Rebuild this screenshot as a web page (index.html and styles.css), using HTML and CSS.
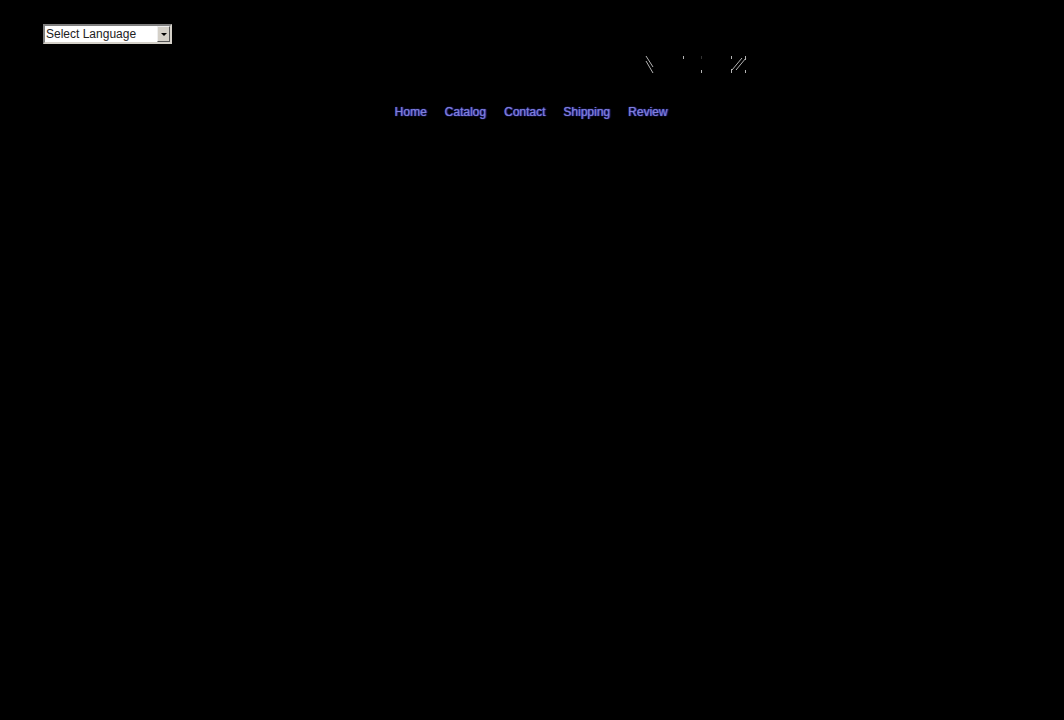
FILE: index.html
```html
<!DOCTYPE html>
<html lang="en">
<head>
<meta charset="utf-8">
<title>Home</title>
<link rel="stylesheet" href="styles.css">
</head>
<body>
<header class="header">
  <div class="language">
    <select class="language-select" aria-label="Select Language">
      <option>Select Language</option>
    </select>
    <span class="language-arrow" aria-hidden="true">
      <svg width="6" height="3" viewBox="0 0 6 3"><path d="M0 0h6L3 3z" fill="#000"/></svg>
    </span>
  </div>
  <div class="brand">
    <svg class="brand-mark" width="102" height="20" viewBox="0 0 102 20" fill="none" stroke="#b4b4b4" stroke-width="1" aria-hidden="true">
      <path d="M1 1l7 11M1 6l7 12M87 15l10-12M91 15l10-12"/>
      <path d="M38.500 1v3M56.500 15v3M86.500 1v3M86.500 14v4M100.500 1v4M100.500 15v3"/>
      <path d="M56.500 1v3" stroke="#333"/>
    </svg>
  </div>
</header>
<nav class="nav">
  <a class="nav-link" href="#">Home</a>
  <a class="nav-link" href="#">Catalog</a>
  <a class="nav-link" href="#">Contact</a>
  <a class="nav-link" href="#">Shipping</a>
  <a class="nav-link" href="#">Review</a>
</nav>
</body>
</html>
```
FILE: styles.css
```css
body {
  margin: 0;
  background: #000;
  font: 12px/16px "Liberation Sans", Arial, sans-serif;
}

.header {
  padding: 24px 43px 0;
}

.language {
  position: relative;
  width: 129px;
}

.language-select {
  appearance: none;
  display: block;
  box-sizing: border-box;
  width: 100%;
  height: 20px;
  margin: 0;
  padding: 0 16px 0 1px;
  border: 2px solid;
  border-color: #808080 #d4d0c8 #d4d0c8 #808080;
  border-radius: 0;
  background: #fff;
  color: #222;
  font: inherit;
}

.language-arrow {
  position: absolute;
  top: 2px;
  right: 2px;
  bottom: 2px;
  display: flex;
  align-items: center;
  justify-content: center;
  box-sizing: border-box;
  width: 13px;
  border: 1px solid;
  border-color: #eee #555 #555 #eee;
  background: #d4d0c8;
  pointer-events: none;
}

.brand {
  display: flex;
  justify-content: center;
  padding: 11px 0 0 328px;
}

.brand-mark {
  display: block;
}

.nav {
  display: flex;
  justify-content: center;
  gap: 18px;
  padding: 29px 2px 0 0;
}

.nav-link {
  color: #8080d8;
  text-decoration: none;
  text-shadow: 0 0 1px #5050d8, 1px 0 1px #3838b0;
}
```
